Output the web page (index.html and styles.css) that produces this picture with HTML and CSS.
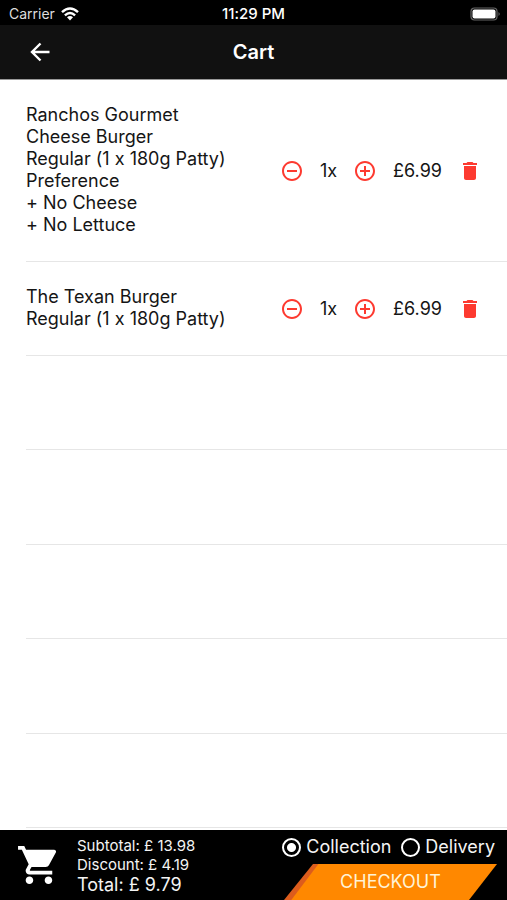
FILE: index.html
```html
<!DOCTYPE html>
<html lang="en">
<head>
<meta charset="utf-8">
<meta name="viewport" content="width=device-width, initial-scale=1">
<title>Cart</title>
<link rel="stylesheet" href="styles.css">
</head>
<body>
<svg class="sprite" aria-hidden="true">
  <symbol id="minus" viewBox="0 0 24 24"><path d="M7 11v2h10v-2H7zm5-9C6.48 2 2 6.48 2 12s4.480 10 10 10 10-4.480 10-10S17.520 2 12 2zm0 18c-4.410 0-8-3.590-8-8s3.590-8 8-8 8 3.590 8 8-3.590 8-8 8z"/></symbol>
  <symbol id="plus" viewBox="0 0 24 24"><path d="M13 7h-2v4H7v2h4v4h2v-4h4v-2h-4V7zm-1-5C6.480 2 2 6.480 2 12s4.480 10 10 10 10-4.480 10-10S17.520 2 12 2zm0 18c-4.410 0-8-3.590-8-8s3.590-8 8-8 8 3.590 8 8-3.590 8-8 8z"/></symbol>
  <symbol id="trash" viewBox="0 0 24 24"><path d="M6 19c0 1.100.9 2 2 2h8c1.100 0 2-.9 2-2V7H6v12zM19 4h-3.500l-1-1h-5l-1 1H5v2h14V4z"/></symbol>
</svg>
<div class="status">
  <div class="carrier">Carrier
    <svg class="wifi" viewBox="0 0 18 14" aria-hidden="true"><g fill="none" stroke="#fff" stroke-width="2.400"><path d="M1 5.200Q9-2.400 17 5.200"/><path d="M3.900 8.300Q9 3.600 14.100 8.300"/></g><path d="M6 10.200Q9 7.600 12 10.200L9 13.500z" fill="#fff"/></svg>
  </div>
  <div class="clock">11:29 PM</div>
  <svg class="battery" viewBox="0 0 31 14" aria-hidden="true"><rect x="1" y="1" width="26" height="12" rx="3.500" fill="#000" stroke="#666" stroke-width="1.200"/><rect x="2.500" y="2.500" width="23" height="9" rx="2" fill="#fff"/><path d="M28.500 5q2.500 2 0 4z" fill="#666"/></svg>
</div>
<header class="header">
  <button class="icon-button" type="button" aria-label="Back"><svg class="back" viewBox="0 0 20 20"><path d="M10.500 1.500L2 10l8.500 8.500M2 10h17.500" fill="none" stroke="#fff" stroke-width="2.400"/></svg></button>
  <h1>Cart</h1>
</header>
<main class="list">
  <section class="row">
    <p class="name">Ranchos Gourmet Cheese Burger<br>Regular (1 x 180g Patty)<br>Preference<br>+ No Cheese<br>+ No Lettuce</p>
    <div class="controls">
      <button class="icon-button" type="button" aria-label="Remove one"><svg class="icon"><use href="#minus"/></svg></button>
      <span class="quantity">1x</span>
      <button class="icon-button" type="button" aria-label="Add one"><svg class="icon"><use href="#plus"/></svg></button>
      <span class="price">£6.99</span>
      <button class="icon-button" type="button" aria-label="Delete"><svg class="icon"><use href="#trash"/></svg></button>
    </div>
  </section>
  <section class="row">
    <p class="name">The Texan Burger<br>Regular (1 x 180g Patty)</p>
    <div class="controls">
      <button class="icon-button" type="button" aria-label="Remove one"><svg class="icon"><use href="#minus"/></svg></button>
      <span class="quantity">1x</span>
      <button class="icon-button" type="button" aria-label="Add one"><svg class="icon"><use href="#plus"/></svg></button>
      <span class="price">£6.99</span>
      <button class="icon-button" type="button" aria-label="Delete"><svg class="icon"><use href="#trash"/></svg></button>
    </div>
  </section>
  <div class="row empty"></div>
  <div class="row empty"></div>
  <div class="row empty"></div>
  <div class="row empty"></div>
  <div class="row empty"></div>
</main>
<footer class="footer">
  <svg class="cart" viewBox="1 2 21 20" aria-hidden="true"><path fill="#fff" d="M7 18c-1.100 0-1.990.9-1.990 2S5.900 22 7 22s2-.9 2-2-.9-2-2-2zM1 2v2h2l3.600 7.590-1.350 2.450c-.16.280-.25.610-.25.960 0 1.100.9 2 2 2h12v-2H7.420c-.14 0-.25-.11-.25-.25l.03-.12.9-1.630h7.450c.75 0 1.410-.41 1.750-1.030l3.580-6.490c.08-.14.120-.31.120-.48 0-.55-.45-1-1-1H5.210l-.94-2H1zm16 16c-1.100 0-1.990.9-1.990 2s.89 2 1.990 2 2-.9 2-2-.9-2-2-2z"/></svg>
  <div class="totals">
    <div>Subtotal: £ 13.98</div>
    <div>Discount: £ 4.19</div>
    <div class="total">Total: £ 9.79</div>
  </div>
  <form class="order">
    <div class="options">
      <label><input type="radio" name="method" checked>Collection</label>
      <label><input type="radio" name="method">Delivery</label>
    </div>
    <button class="checkout" type="button">CHECKOUT</button>
  </form>
</footer>
</body>
</html>
```
FILE: styles.css
```css
* {
  box-sizing: border-box;
}

body {
  margin: 0;
  min-height: 100vh;
  display: flex;
  flex-direction: column;
  background: #fff;
  color: #151515;
  font-family: Inter, "Liberation Sans", sans-serif;
  font-size: 18px;
  font-variant-ligatures: no-contextual;
  line-height: 22px;
}

button {
  border: 0;
  padding: 0;
  background: none;
  font: inherit;
}

svg {
  display: block;
}

.sprite {
  position: absolute;
  width: 0;
  height: 0;
}

.status {
  display: grid;
  grid-template-columns: 1fr auto 1fr;
  align-items: center;
  height: 25px;
  padding: 2px 6px 0;
  background: #000;
  color: #fff;
  font-size: 14px;
}

.carrier {
  display: flex;
  align-items: center;
  gap: 6px;
  padding-left: 3px;
  color: #ddd;
}

.wifi {
  width: 18px;
  height: 14px;
}

.clock {
  font-size: 15px;
  font-weight: 500;
}

.battery {
  width: 31px;
  height: 14px;
  justify-self: end;
}

.header {
  display: grid;
  grid-template-columns: 1fr auto 1fr;
  align-items: center;
  height: 55px;
  padding: 0 30px;
  background: #111;
  border-bottom: 1px solid #999;
  color: #fff;
}

.header h1 {
  margin: 0;
  font-size: 20px;
  font-weight: 600;
}

.back {
  width: 20px;
  height: 20px;
}

.icon-button {
  justify-self: start;
  cursor: pointer;
}

.list {
  flex: 1;
  display: flex;
  flex-direction: column;
  padding: 0 0 2px 26px;
}

.row {
  display: flex;
  align-items: center;
  justify-content: space-between;
  padding-right: 25px;
  border-bottom: 1px solid #e6e6e6;
}

.empty {
  flex: 1;
}

.name {
  width: 208px;
  margin: 0;
  padding: 24px 0 25px;
}

.controls {
  display: flex;
  align-items: center;
  gap: 16px;
}

.icon {
  width: 24px;
  height: 24px;
  fill: #fd3a30;
}

.footer {
  display: flex;
  align-items: stretch;
  height: 70px;
  padding-left: 18px;
  background: #000;
  color: #f4f4f4;
}

.cart {
  width: 40px;
  height: 38px;
  align-self: center;
}

.totals {
  padding: 6px 0 0 19px;
  font-size: 15px;
  line-height: 19px;
}

.totals .total {
  font-size: 18px;
  line-height: 22px;
}

.order {
  display: flex;
  flex-direction: column;
  align-items: flex-end;
  justify-content: space-between;
  margin-left: auto;
  padding-right: 10px;
}

.options {
  display: flex;
  gap: 10px;
  padding: 6px 2px 0 0;
}

.options label {
  display: flex;
  align-items: center;
  gap: 5px;
}

.options input {
  appearance: none;
  width: 19px;
  height: 19px;
  margin: 0;
  border: 2px solid #fff;
  border-radius: 50%;
}

.options input:checked {
  background: radial-gradient(circle, #fff 4px, transparent 5px);
}

.checkout {
  width: 213px;
  height: 36px;
  background: linear-gradient(127deg, #dc5c1c 0 27px, #ff8800 28px);
  clip-path: polygon(29px 0, 100% 0, calc(100% - 28px) 100%, 0 100%);
  color: #fff3d6;
  cursor: pointer;
}
```
